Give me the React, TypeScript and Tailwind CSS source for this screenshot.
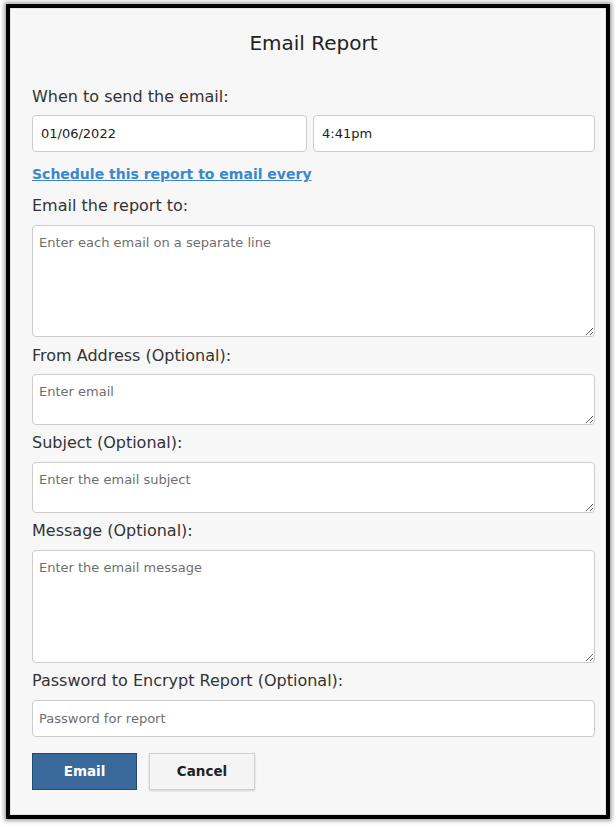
import React from "react";

const font = { fontFamily: '"DejaVu Sans", Verdana, sans-serif' };

const Label = ({ children }: { children: React.ReactNode }) => (
  <div className="text-[16px] leading-[20px] text-[#333]">{children}</div>
);

const Area = ({ placeholder, h }: { placeholder: string; h: string }) => (
  <textarea
    readOnly
    placeholder={placeholder}
    className={`block w-full ${h} rounded-[4px] border border-[#cccccc] bg-white px-[6px] py-[8px] text-[13px] leading-[18px] text-[#222] placeholder:text-[#6f6f6f] outline-none`}
  />
);

export default function App() {
  return (
    <div className="w-[616px] h-[827px] bg-white pt-[4px] pl-[6px]" style={font}>
      <div className="w-[604px] h-[815px] border-[4px] border-black bg-[#f7f7f7] shadow-[0_0_4px_2px_rgba(0,0,0,0.35)]">
        <div className="h-full border border-[#e2e2e2] pl-[21px] pr-[10px]">
          <h1 className="pt-[20px] text-center text-[20px] leading-[28px] text-[#222]">Email Report</h1>

          <div className="mt-[30px]">
            <Label>When to send the email:</Label>
          </div>
          <div className="mt-[8px] flex gap-[6px]">
            <input
              readOnly
              value="01/06/2022"
              className="h-[37px] w-[275px] rounded-[4px] border border-[#cccccc] bg-white px-[8px] text-[13px] text-[#222] outline-none"
            />
            <input
              readOnly
              value="4:41pm"
              className="h-[37px] flex-1 rounded-[4px] border border-[#cccccc] bg-white px-[8px] text-[13px] text-[#222] outline-none"
            />
          </div>

          <a href="#" className="mt-[12px] block text-[14px] leading-[20px] font-bold text-[#3b87cc] underline">
            Schedule this report to email every
          </a>

          <div className="mt-[12px]">
            <Label>Email the report to:</Label>
          </div>
          <div className="mt-[9px]">
            <Area placeholder="Enter each email on a separate line" h="h-[112px]" />
          </div>

          <div className="mt-[9px]">
            <Label>From Address (Optional):</Label>
          </div>
          <div className="mt-[8px]">
            <Area placeholder="Enter email" h="h-[51px]" />
          </div>

          <div className="mt-[8px]">
            <Label>Subject (Optional):</Label>
          </div>
          <div className="mt-[9px]">
            <Area placeholder="Enter the email subject" h="h-[51px]" />
          </div>

          <div className="mt-[8px]">
            <Label>Message (Optional):</Label>
          </div>
          <div className="mt-[9px]">
            <Area placeholder="Enter the email message" h="h-[113px]" />
          </div>

          <div className="mt-[8px]">
            <Label>Password to Encrypt Report (Optional):</Label>
          </div>
          <div className="mt-[9px]">
            <input
              readOnly
              placeholder="Password for report"
              className="block h-[37px] w-full rounded-[4px] border border-[#cccccc] bg-white px-[6px] text-[13px] text-[#222] placeholder:text-[#6f6f6f] outline-none"
            />
          </div>

          <div className="mt-[16px] flex gap-[12px]">
            <button className="h-[37px] w-[105px] border border-[#1e4a73] bg-[#3a6a9c] text-[13.5px] font-bold text-white">
              Email
            </button>
            <button className="h-[37px] w-[106px] border border-[#d0d0d0] bg-[#f4f4f4] text-[13.5px] font-bold text-[#222] shadow-[0_1px_2px_rgba(0,0,0,0.15)]">
              Cancel
            </button>
          </div>
        </div>
      </div>
    </div>
  );
}
